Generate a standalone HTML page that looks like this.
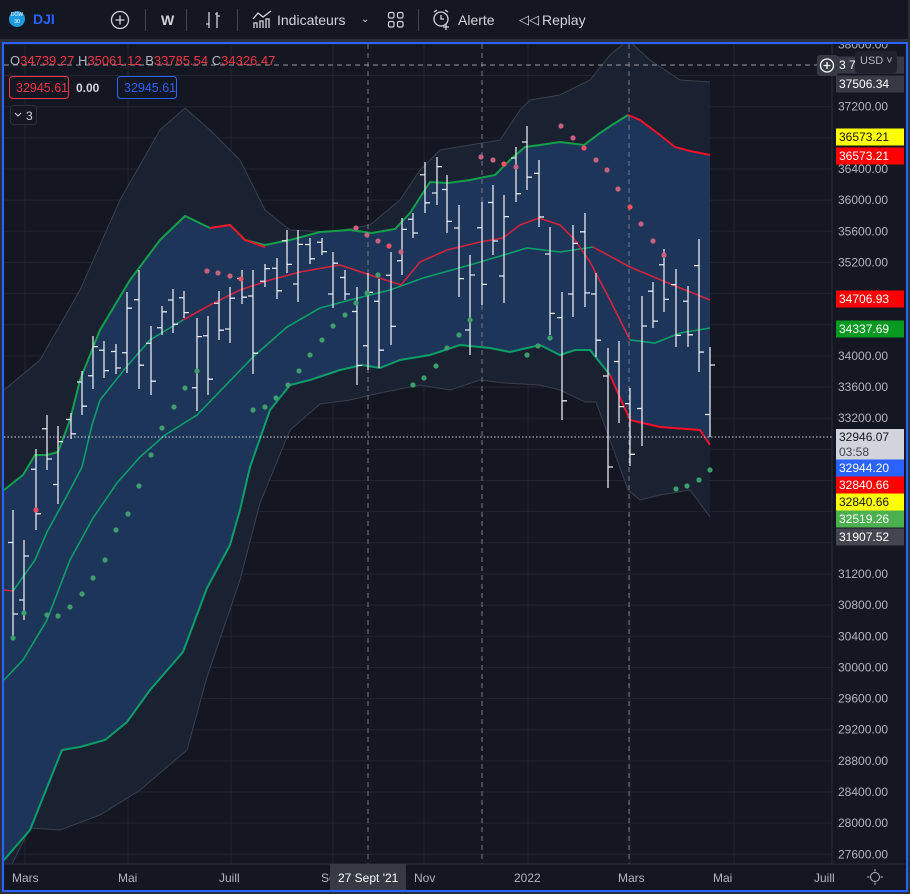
<!DOCTYPE html>
<html><head><meta charset="utf-8"><style>
body{margin:0;width:910px;height:894px;background:#2a2e39;overflow:hidden;font-family:"Liberation Sans",sans-serif}
#tb{position:absolute;left:0;top:0;width:908px;height:39px;background:#131722}
.t{position:absolute;color:#d1d4dc;font-size:14px;top:12px}
.sep{position:absolute;top:9px;width:1px;height:22px;background:#434651}
#ch{position:absolute;left:2px;top:42px;width:902px;height:846px;border:2px solid #2962ff;background:#131722;overflow:hidden}
svg text{font-family:"Liberation Sans",sans-serif}
</style></head><body>
<div id="tb">
<div style="position:absolute;left:9px;top:11px;width:16px;height:16px;border-radius:50%;background:#1e9be0;color:#fff;font-size:5px;text-align:center;line-height:7px;padding-top:1px;box-sizing:border-box">DOW<br>30</div>
<div class="t" style="left:33px;color:#2962ff;font-weight:bold;top:11px">DJI</div>
<svg style="position:absolute;left:110px;top:10px" width="20" height="20"><circle cx="10" cy="10" r="8.5" fill="none" stroke="#d1d4dc" stroke-width="1.3"/><path d="M10 5.5v9M5.5 10h9" stroke="#d1d4dc" stroke-width="1.3"/></svg>
<div class="sep" style="left:145px"></div>
<div class="t" style="left:161px;font-weight:bold">W</div>
<div class="sep" style="left:186px"></div>
<svg style="position:absolute;left:203px;top:10px" width="20" height="20" fill="none" stroke="#d1d4dc" stroke-width="1.3"><path d="M6 2v16M3 14h3M14 2v16M14 6h3M14 4h-2"/></svg>
<div class="sep" style="left:237px"></div>
<svg style="position:absolute;left:251px;top:9px" width="22" height="20" fill="none" stroke="#d1d4dc" stroke-width="1.3"><path d="M2 10l5-6 5 4 8-6M3 19v-5h3v5M9 19v-7h3v7M15 19v-9h3v9"/></svg>
<div class="t" style="left:277px">Indicateurs</div>
<div class="t" style="left:361px;font-size:10px;top:14px">&#8964;</div>
<svg style="position:absolute;left:387px;top:11px" width="18" height="18" fill="none" stroke="#d1d4dc" stroke-width="1.2"><rect x="1.5" y="1.5" width="5.5" height="5.5" rx="1.5"/><rect x="10.5" y="1.5" width="5.5" height="5.5" rx="1.5"/><rect x="1.5" y="10.5" width="5.5" height="5.5" rx="1.5"/><rect x="10.5" y="10.5" width="5.5" height="5.5" rx="1.5"/></svg>
<div class="sep" style="left:418px"></div>
<svg style="position:absolute;left:431px;top:8px" width="22" height="22" fill="none" stroke="#d1d4dc" stroke-width="1.3"><circle cx="10" cy="11" r="7"/><path d="M10 7v4h3M3 4l3-2M17 4l-3-2M15 16v6M12 19h6"/></svg>
<div class="t" style="left:458px">Alerte</div>
<div class="t" style="left:519px;font-size:13px">&#9665;&#9665;</div>
<div class="t" style="left:542px">Replay</div>
</div>
<div id="ch"><svg id="s" width="902" height="846" viewBox="4 44 902 846" style="position:absolute;left:0;top:0"></svg>
</div>
<script>
var S=document.getElementById('s'),h='';
function y(p){return 169+(36400-p)/400*31.15}
for(var p=27600;p<=38000;p+=400)h+='<line x1="4" x2="832" y1="'+y(p)+'" y2="'+y(p)+'" stroke="#20242f"/>';
[25,128,231,333,424,528,630,734].forEach(function(x){h+='<line x1="'+x+'" x2="'+x+'" y1="44" y2="864" stroke="#20242f"/>'});
function P(a){return a.map(function(q){return q.join(',')}).join(' ')}
var ou=[[4,390],[40,360],[80,290],[120,200],[160,130],[185,108],[210,130],[240,160],[265,210],[290,230],[330,232],[370,225],[400,200],[420,170],[440,150],[470,145],[500,140],[520,110],[530,100],[560,95],[590,80],[610,55],[628,40],[650,60],[680,80],[710,82]];
var ol=[[710,517],[690,490],[660,495],[640,500],[628,490],[610,440],[596,402],[585,402],[560,390],[540,385],[505,383],[480,380],[450,390],[420,385],[380,393],[350,400],[320,404],[290,430],[260,503],[240,580],[207,677],[187,750],[140,790],[100,815],[60,830],[30,828],[4,880]];
var gu=[[4,490],[23,475],[35,455],[47,455],[58,452],[70,420],[80,380],[100,330],[130,280],[160,240],[185,216],[210,228],[230,225],[245,240],[265,245],[290,240],[320,232],[350,230],[372,233],[395,229],[410,213],[430,182],[448,183],[470,180],[495,175],[510,160],[525,147],[540,145],[560,142],[584,145],[600,133],[612,125],[628,115]];
var ru=[[628,115],[640,120],[660,135],[675,147],[690,151],[710,155]];
var gl=[[4,860],[30,830],[50,780],[62,750],[80,747],[105,740],[127,722],[150,690],[183,652],[207,588],[230,545],[240,510],[250,467],[270,410],[290,385],[310,380],[340,370],[362,365],[380,368],[400,360],[430,355],[460,345],[490,348],[510,352],[527,348],[540,345],[560,355],[575,350],[590,350],[610,375],[630,420],[660,427],[700,430],[710,445]];
h+='<polygon points="'+P(ou.concat(ol))+'" fill="#1a2231"/>';
h+='<polygon points="'+P(gu.concat(ru,gl.slice().reverse()))+'" fill="#1d3558"/>';
h+='<polyline points="'+P(ou)+'" fill="none" stroke="#3a3f4c"/><polyline points="'+P(ol)+'" fill="none" stroke="#3a3f4c"/>';
var A=[[4,590],[13,591],[35,560],[47,532],[70,490],[82,467],[92,425],[100,400],[128,365],[150,340],[183,320],[210,305],[240,290],[270,280],[300,272],[340,265],[370,275],[401,285],[420,262],[447,250],[480,242],[503,238],[520,225],[539,218],[560,225],[575,240],[590,262],[610,300],[630,340],[655,343],[680,333],[710,328]];
var B=[[4,680],[23,660],[47,620],[70,560],[93,518],[117,483],[140,457],[165,435],[197,415],[253,357],[287,327],[320,308],[350,300],[390,290],[423,278],[470,265],[527,248],[560,252],[593,247],[630,267],[673,285],[710,300]];
h+='<polyline points="'+P(B.slice(0,19))+'" fill="none" stroke="#0c9e6a" stroke-width="1.6"/>';
h+='<polyline points="'+P(B.slice(18))+'" fill="none" stroke="#d1233f" stroke-width="1.6"/>';
h+='<polyline points="'+P(A.slice(0,2))+'" fill="none" stroke="#d1233f" stroke-width="1.6"/>';
h+='<polyline points="'+P(A.slice(1,11))+'" fill="none" stroke="#0c9e6a" stroke-width="1.6"/>';
h+='<polyline points="'+P(A.slice(10,29))+'" fill="none" stroke="#d1233f" stroke-width="1.6"/>';
h+='<polyline points="'+P(A.slice(28))+'" fill="none" stroke="#0c9e6a" stroke-width="1.6"/>';
h+='<polyline points="'+P(gu)+'" fill="none" stroke="#12a14a" stroke-width="2"/>';
h+='<polyline points="'+P(ru)+'" fill="none" stroke="#f2102a" stroke-width="2"/>';
h+='<polyline points="'+P([[210,228],[230,225],[245,240],[265,247]])+'" fill="none" stroke="#f2102a" stroke-width="2"/>';
h+='<polyline points="'+P(gl.slice(0,30))+'" fill="none" stroke="#0c9e6a" stroke-width="2"/>';
h+='<polyline points="'+P(gl.slice(29))+'" fill="none" stroke="#f2102a" stroke-width="2"/>';
[368,482,629].forEach(function(x){h+='<line x1="'+x+'" x2="'+x+'" y1="44" y2="864" stroke="#787b86" stroke-dasharray="5,4"/>'});
h+='<line x1="4" x2="820" y1="65" y2="65" stroke="#9598a1" stroke-dasharray="5,4"/>';
h+='<line x1="4" x2="832" y1="437" y2="437" stroke="#d1d4dc" stroke-dasharray="1.5,2"/>';
var BR=[[13,510,640],[24,540,620],[36,449,530],[47,415,470],[58,426,504],[71,413,439],[82,371,415],[93,336,389],[104,341,378],[116,344,374],[127,292,373],[139,270,389],[151,326,395],[162,306,335],[173,289,333],[184,291,318],[197,318,411],[208,316,395],[219,291,340],[230,287,343],[242,270,304],[253,270,374],[265,264,287],[277,258,299],[287,230,273],[298,230,302],[310,238,264],[322,238,255],[333,252,308],[345,270,300],[357,287,385],[368,273,370],[379,279,368],[391,252,345],[402,218,275],[413,213,238],[425,162,213],[437,157,205],[447,175,233],[459,205,297],[470,255,355],[482,202,305],[493,185,255],[504,195,303],[516,147,202],[527,126,190],[539,160,227],[550,227,335],[562,292,420],[573,225,317],[585,213,307],[596,273,357],[608,348,488],[619,341,423],[630,388,466],[642,296,446],[653,282,328],[664,249,312],[676,269,347],[688,286,347],[699,239,372],[710,347,437]];
BR.forEach(function(b,i){var x=b[0],t=b[1],l=b[2],d=l-t,o,c;
 if(i%3==1){o=t+d*.75;c=t+d*.2}else{o=t+d*.25;c=t+d*.8}
 if(i>=44&&i%2==0){o=t+d*.2;c=t+d*.85}
 h+='<path d="M'+x+' '+t+'V'+l+'M'+(x-5)+' '+o+'H'+x+'M'+x+' '+c+'H'+(x+5)+'" stroke="#e6e8ee" stroke-width="1.3" fill="none"/>'});
var R=[[36,510],[207,271],[218,273],[230,276],[241,279],[356,228],[367,235],[378,241],[389,246],[401,252],[481,157],[493,160],[504,164],[516,167],[561,126],[573,138],[584,148],[596,160],[607,170],[618,189],[630,207],[641,224],[653,241],[664,255]];
R.forEach(function(d,i){h+='<circle cx="'+d[0]+'" cy="'+d[1]+'" r="2.6" fill="'+(i%4==0?'#f05060':'#c86080')+'"/>'});
var G=[[13,638],[24,613],[47,615],[58,616],[70,607],[82,594],[93,578],[105,560],[116,530],[128,514],[139,486],[151,455],[162,428],[174,407],[185,388],[197,371],[253,410],[265,407],[276,398],[288,385],[299,371],[310,355],[322,340],[333,326],[345,315],[356,303],[367,293],[378,275],[413,385],[424,378],[436,366],[447,348],[459,335],[470,320],[527,355],[538,346],[550,338],[676,489],[687,486],[699,480],[710,470]];
G.forEach(function(d){h+='<circle cx="'+d[0]+'" cy="'+d[1]+'" r="2.6" fill="#3e9e6e"/>'});
h+='<rect x="832" y="44" width="74" height="846" fill="#131722"/><line x1="832" x2="832" y1="44" y2="864" stroke="#2a2e39"/>';
h+='<rect x="4" y="864" width="902" height="26" fill="#131722"/><line x1="4" x2="906" y1="864" y2="864" stroke="#2a2e39"/>';
[38000,37200,36400,36000,35600,35200,34000,33600,33200,31200,30800,30400,30000,29600,29200,28800,28400,28000,27600].forEach(function(p){h+='<text x="838" y="'+(y(p)+4)+'" fill="#b2b5be" font-size="12">'+p+'.00</text>'});
function L(yy,txt,bg,fg,hh){hh=hh||17;h+='<rect x="836" y="'+(yy-hh/2)+'" width="68" height="'+hh+'" fill="'+bg+'"/><text x="839" y="'+(yy+4)+'" fill="'+fg+'" font-size="12">'+txt+'</text>'}
L(65,'3       7','#363a45','#fff');L(84,'37506.34','#363a45','#fff');
L(137,'36573.21','#ffff00','#131722');L(156,'36573.21','#ff0000','#fff');
L(299,'34706.93','#ff0000','#fff');L(329,'34337.69','#089922','#fff');
h+='<rect x="836" y="429" width="68" height="31" fill="#d1d4dc"/><text x="839" y="441" fill="#131722" font-size="12">32946.07</text><text x="839" y="456" fill="#434651" font-size="12">03:58</text>';
L(468,'32944.20','#2962ff','#fff');L(485,'32840.66','#ff0000','#fff');L(502,'32840.66','#ffff00','#131722');L(519,'32519.26','#4caf50','#fff');L(537,'31907.52','#434651','#fff');
h+='<rect x="855" y="51" width="42" height="22" rx="3" fill="#1e222d"/><text x="860" y="64" fill="#b2b5be" font-size="11">USD ˅</text>';
h+='<rect x="817" y="55" width="21" height="21" rx="3" fill="#363a45"/><circle cx="827" cy="65.5" r="6.5" fill="none" stroke="#fff" stroke-width="1.3"/><path d="M827 62v7M823.5 65.5h7" stroke="#fff" stroke-width="1.3"/>';
[['Mars',12],['Mai',118],['Juill',219],['Se',321],['Nov',414],['2022',514],['Mars',618],['Mai',713],['Juill',814]].forEach(function(t){h+='<text x="'+t[1]+'" y="882" fill="#b2b5be" font-size="12">'+t[0]+'</text>'});
h+='<rect x="330" y="864" width="76" height="26" fill="#363a45"/><text x="338" y="882" fill="#fff" font-size="12">27 Sept &#39;21</text>';
h+='<circle cx="875" cy="877" r="4.5" fill="none" stroke="#b2b5be"/><path d="M875 869v2.5M875 882.5v2.5M867 877h2.5M880.5 877h2.5" stroke="#b2b5be"/>';
h+='<text x="10" y="65" font-size="13" fill="#b2b5be">O<tspan fill="#f23645">34739.27</tspan> H<tspan fill="#f23645">35061.12</tspan> B<tspan fill="#f23645">33785.54</tspan> C<tspan fill="#f23645">34326.47</tspan></text>';
h+='<rect x="9.5" y="76.5" width="59" height="22" rx="3" fill="#131722" stroke="#f23645"/><text x="16" y="92" font-size="12.5" fill="#f23645">32945.61</text>';
h+='<text x="76" y="92" font-size="12" fill="#d1d4dc" font-weight="bold">0.00</text>';
h+='<rect x="117.5" y="76.5" width="59" height="22" rx="3" fill="#131722" stroke="#2962ff"/><text x="124" y="92" font-size="12.5" fill="#2962ff">32945.61</text>';
h+='<rect x="10.5" y="105.5" width="26" height="19" rx="3" fill="#131722" stroke="#2a2e39"/><path d="M15 113l3 3 3-3" stroke="#d1d4dc" fill="none"/><text x="26" y="120" font-size="12" fill="#d1d4dc">3</text>';
S.innerHTML=h;
</script>
</body></html>
